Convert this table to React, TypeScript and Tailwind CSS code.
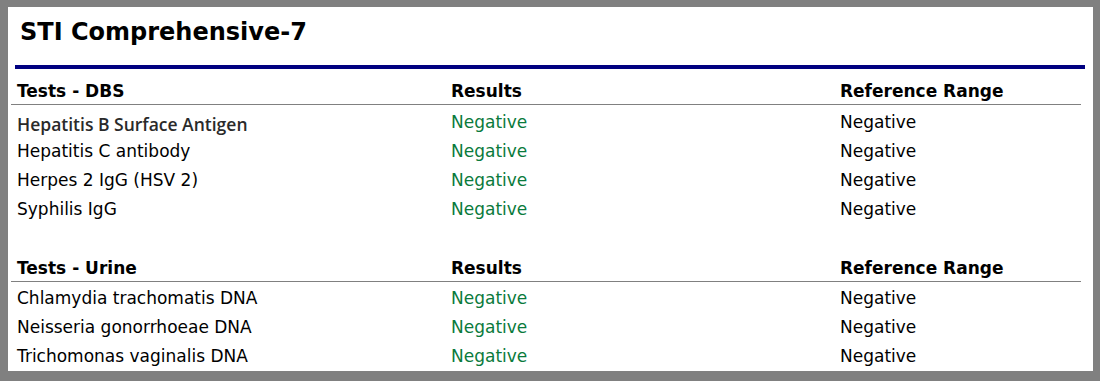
const sections = [
  {
    title: "Tests - DBS",
    rows: [
      { name: "Hepatitis B Surface Antigen", result: "Negative", range: "Negative", alt: true },
      { name: "Hepatitis C antibody", result: "Negative", range: "Negative" },
      { name: "Herpes 2 IgG (HSV 2)", result: "Negative", range: "Negative" },
      { name: "Syphilis IgG", result: "Negative", range: "Negative" },
    ],
  },
  {
    title: "Tests - Urine",
    rows: [
      { name: "Chlamydia trachomatis DNA", result: "Negative", range: "Negative" },
      { name: "Neisseria gonorrhoeae DNA", result: "Negative", range: "Negative" },
      { name: "Trichomonas vaginalis DNA", result: "Negative", range: "Negative" },
    ],
  },
];

export default function App() {
  return (
    <div className="h-[381px] w-[1100px] bg-[#808080] pt-[7px] pl-[8px]">
      <div
        className="h-[364px] w-[1085px] bg-white text-black"
        style={{ fontFamily: "'DejaVu Sans', Tahoma, sans-serif" }}
      >
        <h1 className="pl-[12px] pt-[10px] text-[24px] font-bold leading-[30px]">
          STI Comprehensive-7
        </h1>
        <div className="ml-[7px] mr-[8px] mt-[18px] h-[4px] bg-[#000080]" />

        <div className="ml-[3px] mr-[12px] mt-[10px]">
          {sections.map((s, i) => (
            <div key={s.title} className={i > 0 ? "mt-[32px]" : ""}>
              <div className="grid h-[26px] grid-cols-[434px_389px_1fr] items-center border-b border-[#808080] pl-[6px] text-[17px] font-bold">
                <span>{s.title}</span>
                <span>Results</span>
                <span>Reference Range</span>
              </div>
              <div className={i > 0 ? "pt-[2px]" : "pt-[3px]"}>
                {s.rows.map((r) => (
                  <div
                    key={r.name}
                    className="grid h-[29px] grid-cols-[434px_389px_1fr] items-center pl-[6px] text-[17px]"
                  >
                    {r.alt ? (
                      <span
                        className="pt-[3px] text-[17.5px] font-semibold text-[#2a2a2a]"
                        style={{ fontFamily: "'Open Sans', sans-serif" }}
                      >
                        {r.name}
                      </span>
                    ) : (
                      <span>{r.name}</span>
                    )}
                    <span className="text-[#0a7a3c]">{r.result}</span>
                    <span>{r.range}</span>
                  </div>
                ))}
              </div>
            </div>
          ))}
        </div>
      </div>
    </div>
  );
}
